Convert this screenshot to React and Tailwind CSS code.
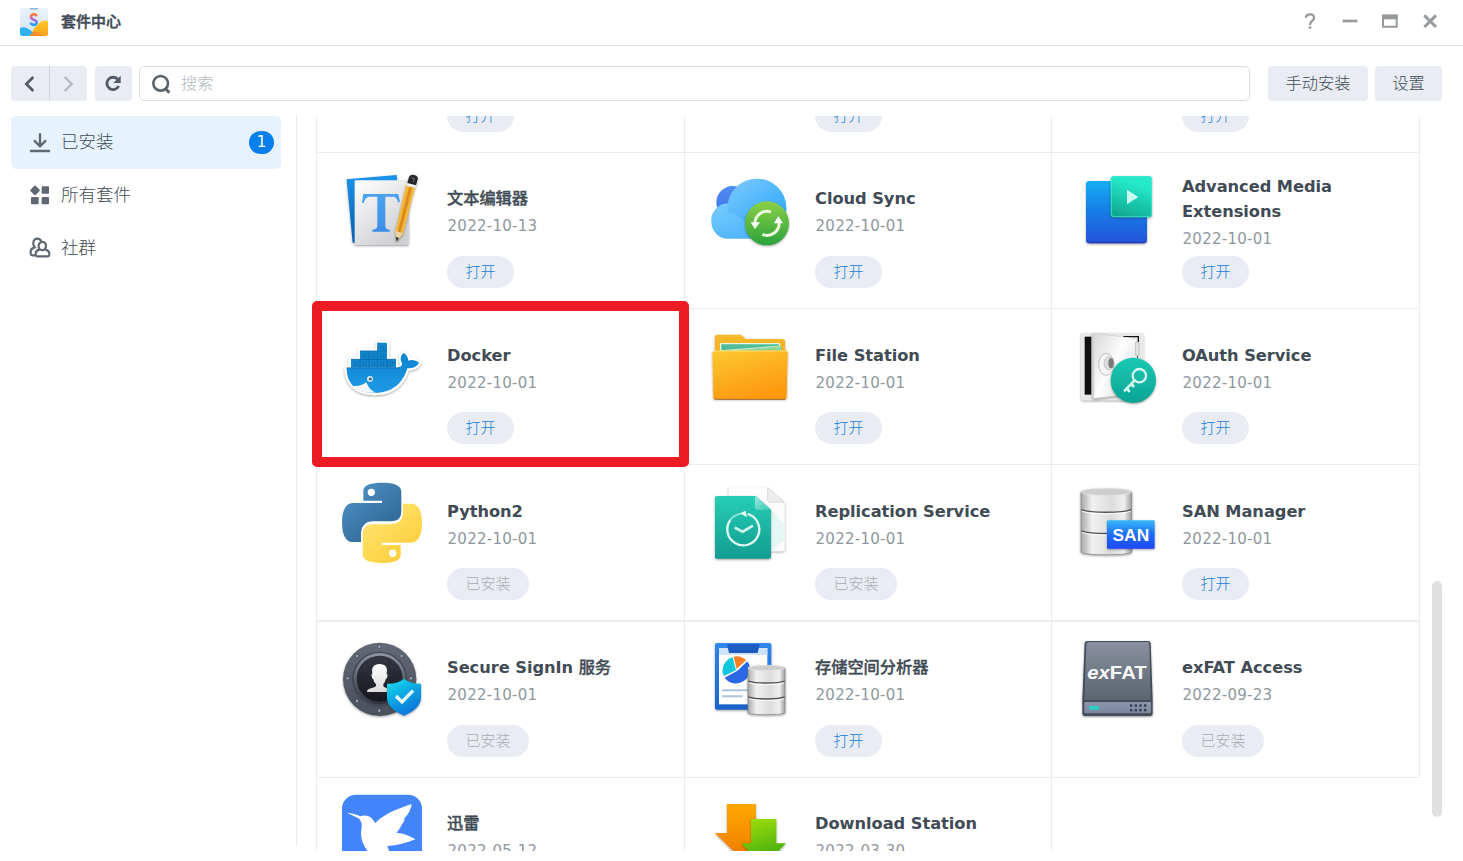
import React from 'react';

/* ---------- Package artwork ---------- */

function Art({ box, children }) {
  return (
    <svg className="h-[86px] w-[90px] shrink-0 overflow-visible" viewBox={box} fill="none">
      {children}
    </svg>
  );
}

function Grad({ id, from, to, mid, x2 = 0, y2 = 1 }) {
  return (
    <linearGradient id={id} x1="0" y1="0" x2={x2} y2={y2}>
      <stop offset="0" stopColor={from} />
      {mid && <stop offset="0.5" stopColor={mid} />}
      <stop offset="1" stopColor={to} />
    </linearGradient>
  );
}

function Shadow({ id }) {
  return (
    <filter id={id} x="-20%" y="-20%" width="140%" height="140%">
      <feDropShadow dx="0" dy="3" stdDeviation="3" floodColor="#222" floodOpacity="0.45" />
    </filter>
  );
}

function TextEditorArt() {
  return (
    <Art box="96 174 270 258">
      <defs>
        <Grad id="teBlue" from="#1b93ec" to="#0a5cae" />
        <Grad id="tePaper" from="#ffffff" to="#cfd0d4" x2={0.6} />
        <Grad id="teT" from="#4aa3f0" to="#3b8ee6" />
        <Shadow id="teS" />
      </defs>
      <g filter="url(#teS)">
        <path d="M110 208 L260 195 L276 390 L128 398 Z" fill="url(#teBlue)" />
        <rect x="134" y="211" width="162" height="194" rx="3" fill="url(#tePaper)" />
      </g>
      <path
        d="M160 252 H265 L270 277 H264 C261 264 257 260 245 260 H226 V344 C226 355 229 357 239 359 V365 H187 V359 C199 357 202 355 202 344 V260 H182 C170 260 165 265 162 278 H156 Z"
        fill="url(#teT)"
      />
      <g filter="url(#teS)">
        <path d="M289 222 L316 229 L279 372 L260 393 L256 366 Z" fill="#f4b63c" />
        <path d="M299 224 L308 227 L270 374 L262 371 Z" fill="#d98b1c" />
        <path d="M256 362 L279 370 L260 394 Z" fill="#e9d3a6" />
        <path d="M257 380 L267 384 L260 395 Z" fill="#333" />
        <path d="M291 217 L318 224 L316 234 L289 227 Z" fill="#f0f0f0" />
        <path d="M297 201 Q301 192 313 195 Q326 199 323 207 L318 226 L292 219 Z" fill="#26272b" />
      </g>
      <path d="M304 203 L313 206 L310 216" stroke="#74777c" strokeWidth="3" />
    </Art>
  );
}

function CloudSyncArt() {
  return (
    <Art box="60 174 270 258">
      <defs>
        <Grad id="csA" from="#4f8df5" to="#3f6fe0" />
        <Grad id="csB" from="#7cc8fb" to="#1da1fa" x2={0.8} />
        <Grad id="csC" from="#8fdcff" to="#4fb4fb" x2={0.4} />
        <Grad id="csG" from="#8bd046" to="#2ba23d" />
        <Shadow id="csS" />
      </defs>
      <circle cx="128" cy="277" r="49" fill="url(#csA)" />
      <path
        d="M113 386 A50 50 0 0 1 64 336 A51 51 0 0 1 114 280 A88 88 0 0 1 201 206 A88 88 0 0 1 289 293 C289 345 260 386 205 386 Z"
        fill="url(#csC)"
      />
      <path
        d="M114 308 A88 88 0 0 1 201 206 A88 88 0 0 1 289 293 C289 345 260 386 205 386 C185 350 150 312 114 308 Z"
        fill="url(#csB)"
        opacity="0.85"
      />
      <circle cx="231" cy="340" r="66" fill="url(#csG)" filter="url(#csS)" />
      <path d="M195 340 A36 36 0 0 1 243 306" stroke="#e9f8dd" strokeWidth="9" />
      <path d="M267 336 A36 36 0 0 1 217 373" stroke="#e9f8dd" strokeWidth="9" />
      <path d="M182 337 H210 L195 357 Z M252 340 H279 L265 318 Z" fill="#fff" />
    </Art>
  );
}

function MediaExtArt() {
  return (
    <Art box="81 174 270 258">
      <defs>
        <Grad id="amB" from="#12aef2" mid="#187be6" to="#2552dc" />
        <Grad id="amG" from="#25e9cb" to="#0a9c82" x2={-0.3} />
        <Shadow id="amS" />
      </defs>
      <rect x="108" y="213" width="183" height="187" rx="10" fill="url(#amB)" filter="url(#amS)" />
      <path d="M112 394 Q114 398 120 398 H280 Q286 398 288 394" stroke="#1c3a9c" strokeWidth="3" />
      <rect x="182" y="198" width="124" height="124" rx="9" fill="url(#amG)" filter="url(#amS)" />
      <rect x="184" y="200" width="120" height="120" rx="8" stroke="#49efd2" strokeWidth="3" opacity="0.7" />
      <path d="M231 239 L265 261 L231 283 Z" fill="#c9faf0" />
    </Art>
  );
}

function DockerArt() {
  const whale =
    'M110 203 H262 C272 202 277 197 276 190 C270 179 271 167 281 159 C290 164 295 174 295 182 C305 178 317 180 327 188 C321 200 309 205 292 205 C280 246 251 279 192 279 C136 279 109 247 110 203 Z';
  return (
    <Art box="96 72 270 258">
      <defs>
        <Grad id="dkB" from="#0b83cf" to="#1f9be6" />
        <Shadow id="dkS" />
      </defs>
      <g filter="url(#dkS)" stroke="#fff" strokeWidth="13" strokeLinejoin="round" fill="#fff">
        <path d={whale} />
        <path d="M123 203 V178 H150 V153 H203 V128 H231 V178 H258 V203 Z" />
      </g>
      <path d={whale} fill="url(#dkB)" />
      <path d="M123 203 V178 H150 V153 H203 V128 H231 V178 H258 V203 Z" fill="#1286cb" />
      <path
        d="M123 178 H258 M150 153 H231 M150 178 V203 M177 153 V203 M203 128 V203 M231 178 V203 M110 204 H270"
        stroke="#0a6aa9"
        strokeWidth="2.5"
      />
      <path
        d="M133 184 V198 M141 184 V198 M160 160 V172 M168 160 V172 M186 160 V172 M194 160 V172 M213 136 V148 M221 136 V148 M213 160 V172 M221 160 V172 M160 184 V198 M168 184 V198 M186 184 V198 M194 184 V198 M213 184 V198 M221 184 V198 M240 184 V198 M248 184 V198"
        stroke="#0b6eae"
        strokeWidth="2.5"
      />
      <path d="M124 257 C141 260 158 256 169 247 C174 260 181 271 197 278 C164 280 139 272 124 257 Z" fill="#f4f7f9" />
      <circle cx="180" cy="237" r="9" fill="#dbe9f2" />
      <circle cx="181" cy="237" r="4.5" fill="#45617a" />
    </Art>
  );
}

function FileStationArt() {
  return (
    <Art box="60 42 270 258">
      <defs>
        <Grad id="fsF" from="#fdc931" to="#fd9a10" x2={0.4} />
        <Grad id="fsB" from="#f9bb2c" to="#f6a91c" />
        <Shadow id="fsS" />
      </defs>
      <g filter="url(#fsS)">
        <path d="M75 80 Q75 74 81 74 H153 L168 87 H279 Q285 87 285 93 V150 H75 Z" fill="url(#fsB)" />
      </g>
      <path d="M90 103 Q90 99 95 99 H266 Q270 99 270 103 V130 H90 Z" fill="#e8f7e4" />
      <path d="M94 103 H267 V107 L94 121 Z" fill="#4fbd9b" />
      <path d="M94 124 L275 108 V130 H94 Z" fill="#8fd79b" />
      <g filter="url(#fsS)">
        <path d="M67 128 Q67 122 73 122 L287 121 Q293 121 293 127 L290 261 Q290 267 284 267 H76 Q70 267 70 261 Z" fill="url(#fsF)" />
      </g>
      <path d="M69 126 Q70 123 74 123 H286 Q290 123 291 126" stroke="#ffe076" strokeWidth="3" />
      <path d="M72 265 Q74 268 79 268 H282 Q287 268 288 265" stroke="#a65a10" strokeWidth="2.5" />
    </Art>
  );
}

function ReplicationArt() {
  return (
    <Art box="60 510 270 258">
      <defs>
        <Grad id="rpG" from="#27cdb5" to="#119d90" />
        <Grad id="rpF" from="#9eebdd" to="#3fcdb9" x2={0.8} />
        <Shadow id="rpS" />
      </defs>
      <path
        d="M116 532 H233 L284 577 V718 Q284 724 278 724 H116 Z"
        fill="#fcfcfc"
        filter="url(#rpS)"
      />
      <path d="M233 533 V571 Q233 577 240 577 H283 Z" fill="#ececec" stroke="#cfcfcf" strokeWidth="2" />
      <path d="M244 602 L283 640 V690 L244 722 Z" fill="#e6f8f4" />
      <path
        d="M75 564 Q75 558 81 558 H197 L243 599 V740 Q243 746 237 746 H81 Q75 746 75 740 Z"
        fill="url(#rpG)"
        filter="url(#rpS)"
      />
      <path d="M195 558 V592 Q195 599 203 599 H243 Z" fill="url(#rpF)" />
      <path d="M121 630 A48 48 0 1 0 173 612" stroke="#dffaf4" strokeWidth="7" />
      <path d="M121 630 A48 48 0 0 1 153 611" stroke="#8fe6d8" strokeWidth="5" />
      <path d="M150 610 L167 602 L171 622 Z" fill="#dffaf4" />
      <path d="M134 653 L158 665 L189 647" stroke="#cff6ee" strokeWidth="8" />
    </Art>
  );
}

function OAuthArt() {
  return (
    <Art box="81 42 270 258">
      <defs>
        <Grad id="oaD" from="#d9d9d9" mid="#fdfdfd" to="#dadada" x2={1} y2={0.8} />
        <Grad id="oaG" from="#19c9b2" to="#0da394" />
        <Shadow id="oaS" />
      </defs>
      <rect x="93" y="69" width="187" height="202" rx="6" fill="#e9e9e9" filter="url(#oaS)" />
      <rect x="104" y="80" width="20" height="174" fill="#111" />
      <path d="M220 80 H265 V97 M262 100 V160" stroke="#151515" strokeWidth="4" />
      <path d="M127 72 L133 69 L262 86 V250 L133 266 L127 262 Z" fill="#d2d2d2" filter="url(#oaS)" />
      <path d="M133 72 L260 86 V250 L133 264 Z" fill="url(#oaD)" />
      <rect x="257" y="96" width="10" height="41" rx="3" fill="#e6e6e6" stroke="#aaa" strokeWidth="2" />
      <ellipse cx="169" cy="163" rx="23" ry="33" fill="#f5f5f5" stroke="#bdbdbd" strokeWidth="3" />
      <ellipse cx="177" cy="160" rx="15" ry="20" fill="#ddd" stroke="#b5b5b5" strokeWidth="2" />
      <ellipse cx="183" cy="160" rx="8" ry="15" fill="#77797c" />
      <circle cx="250" cy="211" r="68" fill="url(#oaG)" filter="url(#oaS)" />
      <circle cx="268" cy="197" r="20" stroke="#d4f9f2" strokeWidth="7" />
      <path d="M254 211 L222 244 M244 222 L252 231 M231 235 L239 246" stroke="#d4f9f2" strokeWidth="8" />
    </Art>
  );
}

function Drum({ x, y, w, h, id }) {
  const r = x + w;
  const mid = x + w / 2;
  const e = w * 0.07;
  const seg = (h - e) / 3;
  return (
    <g>
      <defs>
        <linearGradient id={id} x1="0" x2="1" y1="0" y2="0">
          <stop offset="0" stopColor="#a9a9a9" />
          <stop offset="0.22" stopColor="#f1f1f1" />
          <stop offset="0.6" stopColor="#dcdcdc" />
          <stop offset="0.85" stopColor="#f0f0f0" />
          <stop offset="1" stopColor="#9d9d9d" />
        </linearGradient>
      </defs>
      <path
        d={`M${x} ${y + e} V${y + h - e} C${x} ${y + h} ${r} ${y + h} ${r} ${y + h - e} V${y + e} Z`}
        fill={`url(#${id})`}
        stroke="#808183"
        strokeWidth="2"
      />
      {[1, 2].map((i) => (
        <g key={i}>
          <path
            d={`M${x + 1} ${y + i * seg} C${x + w * 0.2} ${y + i * seg + e} ${x + w * 0.8} ${y + i * seg + e} ${r - 1} ${y + i * seg}`}
            stroke="#55575a"
            strokeWidth="4.5"
          />
          <path
            d={`M${x + 3} ${y + i * seg + 5} C${x + w * 0.2} ${y + i * seg + e + 5} ${x + w * 0.8} ${y + i * seg + e + 5} ${r - 3} ${y + i * seg + 5}`}
            stroke="#fff"
            strokeWidth="2.5"
          />
        </g>
      ))}
      <ellipse cx={mid} cy={y + e} rx={w / 2} ry={e} fill="#cdcdcd" stroke="#e9e9e9" strokeWidth="2" />
    </g>
  );
}

function SanArt() {
  return (
    <Art box="81 510 270 258">
      <defs>
        <Grad id="snB" from="#3ab8f9" mid="#1c6cf8" to="#1c48f5" />
        <Shadow id="snS" />
      </defs>
      <g filter="url(#snS)">
        <Drum x={93} y={535} w={152} h={202} id="snD" />
      </g>
      <rect x="171" y="631" width="143" height="85" rx="3" fill="url(#snB)" filter="url(#snS)" />
      <text
        x="242.5"
        y="693"
        textAnchor="middle"
        textLength="110"
        fill="#fff"
        className="font-['Liberation_Sans',sans-serif] text-[52px] font-bold"
      >
        SAN
      </text>
    </Art>
  );
}

function PythonArt() {
  const half =
    'M160 107 V78 C160 59 184 53 217 53 C250 53 274 60 274 79 V139 Q274 168 245 169 H188 Q156 170 153 203 V231 H127 C106 231 96 206 96 173 C96 138 106 114 131 114 H216 V107 Z';
  return (
    <Art box="96 45 270 258">
      <defs>
        <Grad id="pyB" from="#5497cc" to="#2b628f" x2={0.8} />
        <Grad id="pyY" from="#fdc92f" to="#ffe673" x2={0.8} />
      </defs>
      <path d={half} fill="url(#pyB)" />
      <circle cx="184" cy="82" r="11" fill="#fff" />
      <g transform="rotate(180 216 173.5)">
        <path d={half} fill="url(#pyY)" />
        <circle cx="184" cy="82" r="11" fill="#fff" />
      </g>
    </Art>
  );
}

function SignInArt() {
  const bolts = [
    [208, 545],
    [275, 573],
    [303, 640],
    [208, 737],
    [141, 708],
    [113, 640],
    [141, 573],
  ];
  return (
    <Art box="96 516 270 258">
      <defs>
        <Grad id="siO" from="#636875" to="#4b505c" />
        <Grad id="siR" from="#8d93a3" to="#30343f" />
        <Grad id="siI" from="#343741" to="#17181f" />
        <Grad id="siS" from="#15dff0" to="#0a76d8" x2={0.5} />
        <Grad id="siP" from="#ffffff" to="#dcdcdc" />
        <Shadow id="siF" />
      </defs>
      <circle cx="209" cy="643" r="110" fill="url(#siO)" filter="url(#siF)" />
      <circle cx="209" cy="643" r="83" fill="#444955" />
      <circle cx="209" cy="641" r="73" fill="url(#siI)" stroke="url(#siR)" strokeWidth="8" />
      <circle cx="209" cy="641" r="63" fill="url(#siI)" />
      {bolts.map(([x, y]) => (
        <circle key={`${x}-${y}`} cx={x} cy={y} r="5" fill="#a0a7b6" stroke="#2f333d" strokeWidth="1.5" />
      ))}
      <path
        d="M186 615 Q188 597 208 597 Q230 597 231 615 L230 626 Q234 627 232 635 Q230 641 227 643 Q225 653 220 658 V664 Q224 669 240 672 Q247 674 247 681 H171 Q170 674 178 671 Q194 668 198 663 V658 Q191 652 190 643 Q186 641 185 634 Q183 627 187 626 Z"
        fill="url(#siP)"
      />
      <path
        d="M231 656 Q263 657 282 641 Q301 657 333 656 V697 Q333 731 282 752 Q231 731 231 697 Z"
        fill="url(#siS)"
        filter="url(#siF)"
      />
      <path d="M258 693 L276 711 L309 677" stroke="#e8fbff" strokeWidth="10" />
    </Art>
  );
}

function StorageArt() {
  return (
    <Art box="60 81 270 258">
      <defs>
        <Grad id="stB" from="#2f86ee" to="#1d62cb" />
        <Shadow id="stS" />
      </defs>
      <rect x="75" y="99" width="169" height="200" rx="6" fill="url(#stB)" filter="url(#stS)" />
      <rect x="87" y="114" width="145" height="169" fill="#fff" />
      <rect x="87" y="114" width="145" height="21" fill="#cfe2fb" />
      <path d="M111 103 H209 L203 129 H117 Z" fill="#1c5bc0" />
      <path d="M138 181 L101 198 A41 41 0 0 1 128 142 Z" fill="#10c8dd" />
      <path d="M140 177 L131 140 A41 41 0 0 1 168 151 Z" fill="#fb7f22" />
      <path d="M142 182 L172 154 A41 41 0 0 1 104 203 Z" fill="#2a68e8" />
      <path d="M96 241 H176 M96 259 H158" stroke="#b0c3dd" strokeWidth="6" />
      <g filter="url(#stS)">
        <Drum x={174} y={166} w={111} h={150} id="stD" />
      </g>
    </Art>
  );
}

function ExfatArt() {
  const dots = [243, 257, 271, 285];
  return (
    <Art box="81 81 270 258">
      <defs>
        <Grad id="exA" from="#8a90a0" to="#5b646f" />
        <Grad id="exB" from="#8b96ad" to="#7b879e" />
        <Shadow id="exS" />
      </defs>
      <path
        d="M104 100 Q105 93 112 93 H294 Q301 93 302 100 L308 270 V310 Q308 318 300 318 H105 Q97 318 97 310 V270 Z"
        fill="#454c59"
        filter="url(#exS)"
      />
      <path d="M109 103 Q109 96 116 96 H291 Q298 96 298 103 L302 270 H103 Z" fill="url(#exA)" />
      <rect x="103" y="276" width="200" height="34" rx="3" fill="url(#exB)" />
      <rect x="117" y="288" width="31" height="11" rx="4" fill="#2bcfc4" />
      {dots.map((x) => (
        <g key={x} fill="#333b49">
          <rect x={x - 3} y="283" width="7" height="7" />
          <rect x={x - 3} y="297" width="7" height="7" />
        </g>
      ))}
      <text
        x="112"
        y="207"
        textLength="178"
        lengthAdjust="spacingAndGlyphs"
        fill="#fafafa"
        className="font-['Liberation_Sans',sans-serif] text-[54px] font-bold"
      >
        <tspan className="italic">ex</tspan>FAT
      </text>
    </Art>
  );
}

function XunleiArt() {
  return (
    <Art box="156 129 270 258">
      <rect x="156" y="134" width="240" height="240" rx="42" fill="#4385fd" />
      <path
        d="M171 188 C184 190 200 193 211 199 C224 194 240 197 247 207 Q252 214 256 219 C281 192 323 176 365 162 C363 178 355 194 343 205 C345 212 339 219 334 226 C330 235 325 243 319 248 C341 250 360 257 376 268 C350 278 322 287 292 288 L303 320 H250 C226 300 213 277 213 250 C213 237 220 221 208 207 C199 200 185 196 171 188 Z"
        fill="#fff"
      />
    </Art>
  );
}

function DownloadArt() {
  return (
    <Art box="60 549 270 258">
      <defs>
        <Grad id="dlO" from="#fea904" to="#ef7a06" />
        <Grad id="dlG" from="#a2e006" to="#3fa90d" x2={0.3} />
        <Shadow id="dlS" />
      </defs>
      <path d="M111 582 H198 V669 H236 L155 748 L75 669 H111 Z" fill="url(#dlO)" filter="url(#dlS)" />
      <path d="M183 627 H259 V700 H288 L221 768 L154 700 H183 Z" fill="url(#dlG)" filter="url(#dlS)" />
    </Art>
  );
}

/* ---------- Small interface icons ---------- */

function StoreLogo() {
  return (
    <svg className="-mt-[2px] h-7 w-7" viewBox="0 0 84 84">
      <defs>
        <Grad id="lgS" from="#ff7a2e" mid="#b06ae8" to="#1ba4f3" />
        <Grad id="lgO" from="#ffc928" to="#f9a11c" />
        <Grad id="lgB" from="#eaf3fb" to="#cfe4f6" />
        <clipPath id="lgC">
          <rect width="84" height="84" rx="7" />
        </clipPath>
      </defs>
      <g clipPath="url(#lgC)">
        <rect width="84" height="84" fill="url(#lgB)" />
        <path d="M28 0 H56 L52 5 H32 Z" fill="#94bcd9" />
        <path d="M30 84 C40 62 52 50 62 42 Q72 34 84 40 V84 Z" fill="url(#lgO)" />
        <path d="M0 60 Q16 54 30 66 Q40 76 52 84 H0 Z" fill="#2fb0f2" />
        <path d="M28 84 Q46 58 66 84 Z" fill="#fa8a2a" />
        <path
          d="M50 25 C47 16 33 17 33 27 C33 37 50 33 50 43 C50 53 35 53 32 44"
          fill="none"
          stroke="url(#lgS)"
          strokeWidth="8"
        />
      </g>
    </svg>
  );
}

function Glyph({ box, className, children }) {
  return (
    <svg className={className} viewBox={box} fill="none" stroke="currentColor">
      {children}
    </svg>
  );
}

function WindowControls() {
  return (
    <div className="-mt-[3px] flex items-center text-[#979a9c]">
      <Glyph box="240 33 60 60" className="h-5 w-5">
        <path d="M257 53 Q259 43 270 43 Q282 43 282 53 Q282 59 276 63 Q270 67 270 75" strokeWidth="7" />
        <rect x="266" y="79" width="8" height="7" fill="currentColor" stroke="none" />
      </Glyph>
      <Glyph box="360 33 60 60" className="ml-5 h-5 w-5">
        <path d="M368 63 H412" strokeWidth="8" />
      </Glyph>
      <Glyph box="480 33 60 60" className="ml-5 h-5 w-5">
        <path d="M489 46 V80 H530 V46" strokeWidth="6" />
        <rect x="486" y="43" width="47" height="15" fill="currentColor" stroke="none" />
      </Glyph>
      <Glyph box="600 33 60 60" className="ml-5 h-5 w-5">
        <path d="M613 46 L648 81 M648 46 L613 81" strokeWidth="9" />
      </Glyph>
    </div>
  );
}

/* ---------- Data ---------- */

const OPEN = '打开';
const INSTALLED = '已安装';

const rows = [
  {
    height: 'h-[156px] border-b',
    apps: [
      { cjk: '文本编辑器', date: '2022-10-13', action: OPEN, art: TextEditorArt },
      { name: 'Cloud Sync', date: '2022-10-01', action: OPEN, art: CloudSyncArt },
      { name: 'Advanced Media Extensions', date: '2022-10-01', action: OPEN, art: MediaExtArt, tall: true },
    ],
  },
  {
    height: 'h-[156px] border-b',
    low: true,
    apps: [
      { name: 'Docker', date: '2022-10-01', action: OPEN, art: DockerArt },
      { name: 'File Station', date: '2022-10-01', action: OPEN, art: FileStationArt },
      { name: 'OAuth Service', date: '2022-10-01', action: OPEN, art: OAuthArt },
    ],
  },
  {
    height: 'h-[157px] border-b-2',
    low: true,
    apps: [
      { name: 'Python2', date: '2022-10-01', action: INSTALLED, art: PythonArt },
      { name: 'Replication Service', date: '2022-10-01', action: INSTALLED, art: ReplicationArt },
      { name: 'SAN Manager', date: '2022-10-01', action: OPEN, art: SanArt },
    ],
  },
  {
    height: 'h-[156px] border-b',
    apps: [
      { name: 'Secure SignIn ', cjk: '服务', date: '2022-10-01', action: INSTALLED, art: SignInArt },
      { cjk: '存储空间分析器', date: '2022-10-01', action: OPEN, art: StorageArt },
      { name: 'exFAT Access', date: '2022-09-23', action: INSTALLED, art: ExfatArt },
    ],
  },
  {
    height: 'h-[156px]',
    apps: [
      { cjk: '迅雷', date: '2022-05-12', action: OPEN, art: XunleiArt },
      { name: 'Download Station', date: '2022-03-30', action: OPEN, art: DownloadArt },
    ],
  },
];

function ActionPill({ label }) {
  const open = label === OPEN;
  return (
    <button
      className={`block h-8 rounded-full bg-[#e9ecf3] text-center text-[15px] font-light leading-8 ${
        open ? 'w-[67px] text-[#1580d8]' : 'w-[82px] text-[#a8adb2]'
      }`}
    >
      {label}
    </button>
  );
}

function AppCell({ app, last, low }) {
  const Drawing = app.art;
  const top = app.tall ? 'pt-[6px]' : low ? 'pt-[19px]' : 'pt-[18px]';
  const gap = app.tall ? 'mt-[5px]' : low ? 'mt-[17px]' : 'mt-[18px]';
  return (
    <div className={`flex pl-[25px] pt-[15px] ${last ? '' : 'border-r border-[#ebedee]'}`}>
      <Drawing />
      <div className={`ml-[15px] flex flex-col ${top}`}>
        <div
          className={`text-[16.25px] leading-[25px] tracking-[-0.05px] text-[#414b55] ${
            app.tall ? 'h-[50px] w-[180px]' : 'h-[25px]'
          }`}
        >
          {app.name && <span className="whitespace-pre-wrap font-bold">{app.name}</span>}
          {app.cjk && <span className="font-medium [-webkit-text-stroke:0.35px_#414b55]">{app.cjk}</span>}
        </div>
        <div className="mt-[3px] h-6 pl-[0.5px] text-[15px] leading-6 tracking-[0.27px] text-[#8f979e]">{app.date}</div>
        <div className={gap}>
          <ActionPill label={app.action} />
        </div>
      </div>
    </div>
  );
}

function AppGrid() {
  return (
    <div className="relative ml-[19px] h-[735px] w-[1126px] overflow-hidden">
      <div className="w-[1104px] border-x border-[#ebedee]">
        <div className="grid h-[37px] grid-cols-[368px_367px_1fr] border-b border-[#ebedee]">
          {[0, 1, 2].map((i) => (
            <div key={i} className={`flex items-end overflow-hidden pb-5 pl-[130px] ${i < 2 ? 'border-r border-[#ebedee]' : ''}`}>
              <ActionPill label={OPEN} />
            </div>
          ))}
        </div>
        {rows.slice(0, 4).map((row, i) => (
          <div key={i} className={`grid grid-cols-[368px_367px_1fr] border-[#ebedee] ${row.height}`}>
            {row.apps.map((app, j) => (
              <AppCell key={j} app={app} last={j === 2} low={row.low} />
            ))}
          </div>
        ))}
      </div>
      <div className="w-[1104px] border-l border-[#ebedee]">
        <div className="grid h-[156px] grid-cols-[368px_367px_1fr]">
          {rows[4].apps.map((app, j) => (
            <AppCell key={j} app={app} last={false} />
          ))}
        </div>
      </div>
      <div className="absolute right-0 top-[465px] h-[236px] w-[10px] rounded-full bg-[#e0e0e0]" />
    </div>
  );
}

function Sidebar() {
  return (
    <nav className="flex h-[730px] w-[286px] flex-col border-r border-[#e6eaec] text-[17.5px] font-light text-[#414b55]">
      <div className="flex h-[53px] w-[270px] items-center rounded-[5px] bg-[#e6f2fe] pl-[17px] pr-[7px]">
        <Glyph box="84 396 72 66" className="h-[22px] w-6 text-[#5f6772]">
          <path d="M120 400 V438 M102 421 L120 439 L138 421" strokeWidth="7" />
          <path d="M93 453 H147" strokeWidth="7" strokeLinecap="round" />
        </Glyph>
        <span className="ml-[9px]">已安装</span>
        <span className="ml-auto flex h-[23px] w-[25px] items-center justify-center rounded-full bg-[#057feb] text-[15px] font-normal leading-none text-white">
          1
        </span>
      </div>
      <div className="flex h-[53px] items-center pl-[17px]">
        <Glyph box="84 554 72 66" className="h-[22px] w-6 text-[#5f6772]">
          <g fill="currentColor" stroke="none">
            <path
              d="M105 558 L117 570 L105 582 L93 570 Z"
              stroke="currentColor"
              strokeWidth="5"
              strokeLinejoin="round"
            />
            <rect x="125" y="558" width="22" height="22" rx="2" />
            <rect x="93" y="590" width="23" height="22" rx="3" />
            <rect x="125" y="590" width="22" height="22" rx="3" />
          </g>
        </Glyph>
        <span className="ml-[9px]">所有套件</span>
      </div>
      <div className="flex h-[52px] items-center pl-[17px]">
        <Glyph box="84 711 72 66" className="h-[22px] w-6 text-[#5f6772]">
          <path
            d="M107 766 H97 Q92 766 92 760 V754 Q93 745 104 742 Q99 735 100 727 Q102 716 112 716 Q121 716 124 725"
            strokeWidth="6.5"
          />
          <path
            d="M119 748 Q115 742 116 736 Q118 726 127 726 Q137 726 138 736 Q138 743 134 748 Q147 751 148 760 Q149 769 142 769 H113 Q106 769 107 760 Q108 751 119 748 Q127 753 134 748"
            strokeWidth="6.5"
          />
        </Glyph>
        <span className="ml-[9px]">社群</span>
      </div>
    </nav>
  );
}

function Toolbar() {
  return (
    <div className="flex h-[35px] text-[16.25px] font-light text-[#414b55]">
      <div className="flex w-[76px] overflow-hidden rounded-[4px] bg-[#e9ecf3]">
        <button className="flex w-[39px] items-center justify-center border-r border-[#cdd4da]">
          <Glyph box="66 222 48 60" className="h-5 w-4 text-[#535b66]">
            <path d="M100 231 L79 252 L100 273" strokeWidth="8" />
          </Glyph>
        </button>
        <button className="flex flex-1 items-center justify-center pr-[2px]">
          <Glyph box="181 222 48 60" className="h-5 w-4 text-[#b3b8bf]">
            <path d="M195 231 L216 252 L195 273" strokeWidth="7" />
          </Glyph>
        </button>
      </div>
      <button className="ml-2 flex w-[37px] items-center justify-center rounded-[4px] bg-[#e9ecf3] pb-px pr-px">
        <Glyph box="309 219 60 60" className="h-5 w-5 text-[#535b66]">
          <path d="M354 239 A18.5 18.5 0 1 0 356 258" strokeWidth="8.5" />
          <path d="M362 227 V249 H340 Z" fill="currentColor" stroke="none" />
        </Glyph>
      </button>
      <div className="ml-[7px] flex w-[1111px] items-center rounded-[5px] border border-[#d7dfe3] bg-white pl-[11px] text-[#b3b9bd]">
        <Glyph box="453 222 60 60" className="h-5 w-5 text-[#5b636d]">
          <circle cx="482" cy="250" r="22" strokeWidth="8" />
          <path d="M495 264 L508 278" strokeWidth="9" />
        </Glyph>
        <span className="ml-[10px] pt-[2px]">搜索</span>
      </div>
      <button className="ml-[18px] w-[100px] rounded-[4px] bg-[#e9ecf3] pt-[2px]">手动安装</button>
      <button className="ml-[7px] w-[67px] rounded-[4px] bg-[#e9ecf3] pt-[2px]">设置</button>
    </div>
  );
}

export default function App() {
  return (
    <div className="relative h-[861px] w-[1463px] overflow-hidden bg-white font-['DejaVu_Sans','Noto_Sans_CJK_SC',sans-serif]">
      <header className="flex h-[46px] items-center border-b border-[#e0e6e8] pl-5 pr-[23px]">
        <StoreLogo />
        <span className="ml-[13px] flex-1 text-[15px] font-medium text-[#414b55] [-webkit-text-stroke:0.45px_#414b55]">
          套件中心
        </span>
        <WindowControls />
      </header>
      <main className="px-[11px] pt-5">
        <Toolbar />
        <div className="mt-[15px] flex">
          <Sidebar />
          <AppGrid />
        </div>
      </main>
      <div className="pointer-events-none absolute left-[312px] top-[301px] h-[166px] w-[377px] rounded-[5px] border-[10px] border-[#ed1c24]" />
    </div>
  );
}
